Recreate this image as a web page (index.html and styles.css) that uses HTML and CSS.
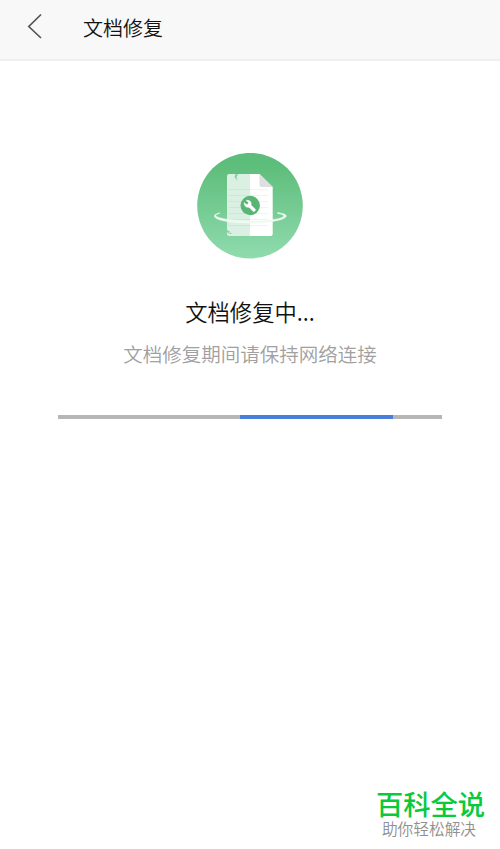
FILE: index.html
```html
<!DOCTYPE html>
<html lang="zh-CN">
<head>
<meta charset="utf-8">
<title>文档修复</title>
<link rel="stylesheet" href="styles.css">
</head>
<body>
<header class="topbar">
  <svg class="back" width="16" height="26" viewBox="0 0 16 26"><path d="M14 1.5 1.8 13.5 14 25"/></svg>
  <h1 class="title">文档修复</h1>
</header>
<main class="content">
  <svg class="emblem" width="106" height="106" viewBox="0 0 106 106">
    <defs>
      <linearGradient id="disc" x1="0" y1="0" x2="0" y2="1"><stop offset="0.1" stop-color="#5dbd7a"/><stop offset="1" stop-color="#90dbae"/></linearGradient>
    </defs>
    <circle cx="53" cy="52.7" r="52.8" fill="url(#disc)"/>
    <path d="M32 21H53V83H32Q30 83 30 81V23Q30 21 32 21Z" fill="#d9f0e2"/>
    <path d="M53 21H62.5L75.7 34V81Q75.7 83 73.7 83H53Z" fill="#fff"/>
    <path d="M62.5 21V32Q62.5 34 64.5 34H75.7Z" fill="#e0dedf"/>
    <path class="rules left" d="M31 36.5H53M31 42.5H53M31 48.5H53M31 54.5H53M31 60.5H53M31 66.5H53M31 72.5H53"/>
    <path class="rules right" d="M53 36.5H71M53 42.5H71M53 48.5H71M53 54.5H71M53 60.5H71M53 66.5H71M53 72.5H71"/>
    <path d="M38.5 21 37.5 24 40.5 28 39.5 24.5 41 21ZM30 77 33 78.5 32 79.7 35.5 80 33 81 30 79Z" fill="#8ccfa4"/>
    <path d="M22.5 59.8C15 61.5 15.5 65.2 25 67.5C41 71.3 69 70.8 82 67.2C92 64.5 92 61 80.5 59.6L80.5 60.4C89.5 61.8 88 64.3 80 65.9C66 68.6 42 68.6 27 65.7C17.5 63.8 17 61.8 22.5 60.6Z" fill="#effaf2" stroke="#effaf2" stroke-width=".4"/>
    <circle cx="53.2" cy="52.5" r="9.7" fill="#58b574"/>
    <path d="M49.2 47.4 51.5 49.6 51 51.3 49.4 51.6 47.2 49.6C46.9 53 49.5 54.9 52 54.2L56 58.2Q57 58.9 57.9 58Q58.9 57 58.1 56L54 52.1C54.9 49 52.5 46.8 49.2 47.4Z" fill="#fff" stroke="#fff" stroke-width=".5" stroke-linejoin="round"/>
  </svg>
  <h2 class="status">文档修复中...</h2>
  <p class="hint">文档修复期间请保持网络连接</p>
  <div class="track"><div class="runner"></div></div>
</main>
<footer class="brand">
  <div class="brand-name">百科全说</div>
  <div class="brand-tag">助你轻松解决</div>
</footer>
</body>
</html>
```
FILE: styles.css
```css
* {
  box-sizing: border-box;
}

body {
  margin: 0;
  height: 849px;
  display: flex;
  flex-direction: column;
  overflow: hidden;
  background: #fff;
  font-family: "Noto Sans CJK SC", sans-serif;
}

h1, h2, p {
  margin: 0;
  font-weight: 350;
  white-space: nowrap;
}

.topbar {
  height: 61px;
  display: flex;
  align-items: flex-start;
  padding: 13px 0 0 27px;
  background: #f8f8f8;
  border-bottom: 2px solid #efefef;
}

.back {
  fill: none;
  stroke: #555;
  stroke-width: 1.7;
}

.title {
  margin: 1px 0 0 40px;
  font-size: 20px;
  line-height: 28px;
  color: #111;
}

.content {
  flex: 1;
  display: flex;
  flex-direction: column;
  align-items: center;
  padding-top: 92px;
}

.emblem {
  display: block;
}

.rules {
  fill: none;
  stroke-width: 0.7;
}

.left {
  stroke: #c8e3d2;
}

.right {
  stroke: #e6efe9;
}

.status {
  margin-top: 35px;
  font-size: 22.3px;
  line-height: 34px;
  color: #111;
}

.hint {
  margin-top: 11px;
  font-size: 19.5px;
  line-height: 30px;
  color: #a0a0a0;
}

.track {
  width: 384px;
  height: 4px;
  margin-top: 46px;
  background: #b5b6b6;
}

.runner {
  width: 153px;
  height: 100%;
  margin-left: 182px;
  background: #4a7edb;
}

.brand {
  width: 139px;
  height: 63px;
  align-self: flex-end;
  text-align: center;
  white-space: nowrap;
}

.brand-name {
  font-size: 27.3px;
  line-height: 34px;
  font-weight: 500;
  color: #09ca3a;
}

.brand-tag {
  padding-right: 3px;
  font-size: 15.7px;
  line-height: 18px;
  font-weight: 350;
  color: #909090;
}
```
